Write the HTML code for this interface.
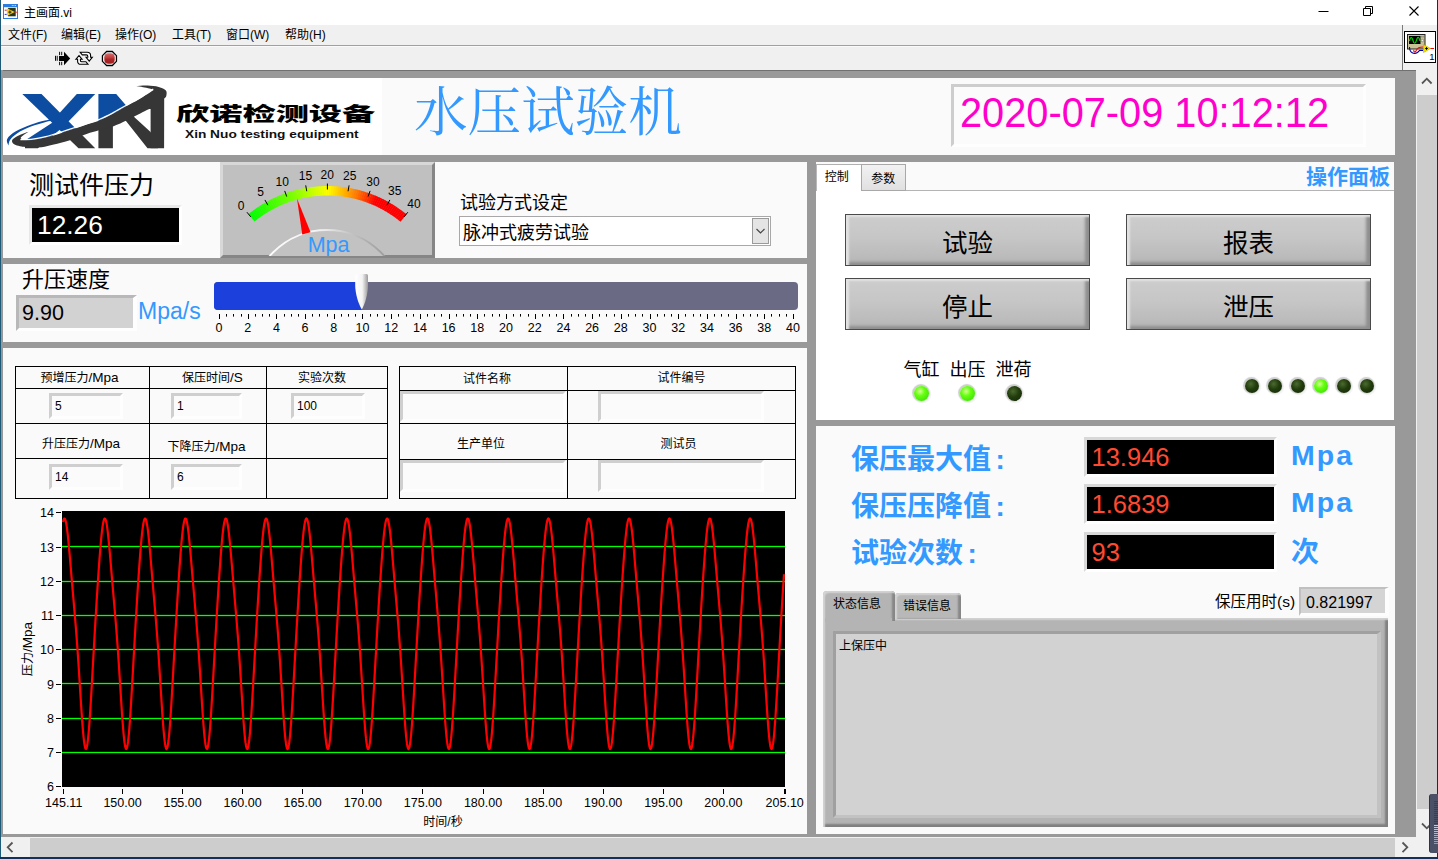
<!DOCTYPE html>
<html lang="zh-CN"><head><meta charset="utf-8"><title>主画面.vi</title>
<style>
html,body{margin:0;padding:0;}
body{width:1438px;height:859px;overflow:hidden;background:#fff;position:relative;font-family:"Liberation Sans","Noto Sans CJK SC",sans-serif;}
body div, body svg{position:absolute;}
.t{white-space:nowrap;}
.l{font-size:113%;}
#titlebar{left:0;top:0;width:1438px;height:25px;background:#fff;}
</style></head><body>
<div id="titlebar"></div>
<svg style="left:3px;top:4px" width="16" height="16" viewBox="0 0 16 16">
<rect x="0.5" y="0.5" width="14" height="14" fill="#fff" stroke="#2b7de0"/>
<rect x="0" y="0" width="15" height="3.200" fill="#2b7de0"/>
<rect x="8.800" y="1" width="1" height="1" fill="#f4e04a"/><rect x="10.400" y="1" width="1" height="1" fill="#f4e04a"/><rect x="12" y="1" width="1" height="1" fill="#f4e04a"/>
<rect x="5.100" y="3.900" width="7.600" height="8.400" fill="#27351c"/>
<path d="M3.900 4.300L11.800 8.100L3.900 11.900Z" fill="#f2d21a"/>
<path d="M5.300 8.100h3.200M6.900 6.500v3.200" stroke="#1a1a1a" stroke-width="1"/>
<rect x="1.700" y="5.700" width="2" height="1" fill="#e02020"/><rect x="1.700" y="9.900" width="2" height="1" fill="#2030e0"/><rect x="11.700" y="7.700" width="2.200" height="1" fill="#e02020"/>
</svg>
<div class="t" style='left:24px;top:4.3px;font-size:12px;color:#000;line-height:18px;'>主画面.vi</div>
<svg style="left:1300px;top:0" width="138" height="25" viewBox="0 0 138 25">
<path d="M18.5 11.5h10" stroke="#000" stroke-width="1" fill="none"/>
<path d="M63.5 8.5h7v7h-7z M65.5 8.5v-2h7v7h-2" stroke="#000" stroke-width="1" fill="none"/>
<path d="M109.5 6.5l9 9M118.5 6.5l-9 9" stroke="#000" stroke-width="1.1" fill="none"/>
</svg>
<div style="left:0px;top:25px;width:1438px;height:45px;background:#f0f0f0"></div>
<div style="left:0px;top:45px;width:1402px;height:1px;background:#a0a0a0"></div>
<div style="left:0px;top:46px;width:1402px;height:1px;background:#fafafa"></div>
<div style="left:1402px;top:25px;width:1px;height:45px;background:#7a7a7a"></div>
<div class="t" style='left:8px;top:25.5px;font-size:12px;color:#000;line-height:18px;'>文件(F)</div>
<div class="t" style='left:61px;top:25.5px;font-size:12px;color:#000;line-height:18px;'>编辑(E)</div>
<div class="t" style='left:115px;top:25.5px;font-size:12px;color:#000;line-height:18px;'>操作(O)</div>
<div class="t" style='left:172px;top:25.5px;font-size:12px;color:#000;line-height:18px;'>工具(T)</div>
<div class="t" style='left:226px;top:25.5px;font-size:12px;color:#000;line-height:18px;'>窗口(W)</div>
<div class="t" style='left:285px;top:25.5px;font-size:12px;color:#000;line-height:18px;'>帮助(H)</div>
<svg style="left:50px;top:48px" width="80" height="22" viewBox="50 48 80 22">
<path d="M59 56h5v-4.200l6.200 6.700-6.200 6.700v-4.200h-5z" fill="#000"/>
<path d="M55.500 55.800v5M57.200 55.800v5M59.600 51.800v3.400M61.700 51.800v3.400M59.600 61.800v3.400M61.700 61.800v3.400" stroke="#000" stroke-width="0.950"/>
<path d="M80.2 52.3 H87.2 Q90.6 52.3 90.6 55.4 V57.3 H92.3 L89.2 61.1 L86.1 57.3 H87.8 V56.2 Q87.8 54.9 86.4 54.9 H82.3 Z" fill="#fff" stroke="#000" stroke-width="1.100" stroke-linejoin="miter"/>
<path d="M88.0 64.3L81.0 64.3Q77.6 64.3 77.6 61.2L77.6 59.3L75.9 59.3L79.0 55.5L82.1 59.3L80.4 59.3L80.4 60.4Q80.4 61.7 81.8 61.7L85.9 61.7Z" fill="#fff" stroke="#000" stroke-width="1.100" stroke-linejoin="miter"/>
<defs><linearGradient id="abg" x1="0" x2="0" y1="0" y2="1"><stop offset="0" stop-color="#d46a6a"/><stop offset="0.45" stop-color="#c03a3a"/><stop offset="0.55" stop-color="#ac2626"/><stop offset="1" stop-color="#a02020"/></linearGradient></defs>
<path d="M106.600 51.500h5.700l4.150 4.150v5.700l-4.150 4.150h-5.700l-4.150-4.150v-5.700z" fill="#fff" stroke="#000" stroke-width="1.300"/>
<rect x="104.300" y="53.300" width="10.400" height="10.400" rx="4" ry="4" fill="url(#abg)"/>
</svg>
<svg style="left:1404px;top:31px" width="33" height="33" viewBox="0 0 33 33">
<rect x="0.5" y="0.5" width="31" height="31" fill="#fff" stroke="#000"/>
<rect x="3.500" y="3.500" width="17.500" height="14.500" fill="#c8c498" stroke="#222" stroke-width="1"/>
<rect x="5" y="5" width="11.500" height="8" fill="#000"/>
<path d="M5.500 10 C6.500 5.500 8 5.500 9 9.500 S11.500 13 12.600 9 S15 5.500 16 10" stroke="#0c0" stroke-width="1.200" fill="none"/>
<circle cx="18.400" cy="9.500" r="1.300" fill="#eee" stroke="#a86"/>
<path d="M17.800 5v1.500M19.200 5v1.500" stroke="#666" stroke-width="0.700"/>
<path d="M5.500 16 C5.500 22 10 23.500 13.500 21.500 L15.500 19.500 H19" stroke="#00a" stroke-width="1.100" fill="none"/>
<path d="M10 19 C9 21.500 11.500 21.500 12.500 19 C13.500 16.500 16 16 19 16" stroke="#f00" stroke-width="1.100" fill="none"/>
<path d="M19.500 13.500 L26.500 17.500 L19.500 21.500 Z" fill="#f0e000" stroke="#b8a800" stroke-width="0.600"/>
<path d="M21.200 17.500h2.600M22.500 16.200v2.600" stroke="#000" stroke-width="1"/>
<path d="M26.500 17.500h3.500" stroke="#f00" stroke-width="1"/>
<text x="25.200" y="28.500" font-family="Liberation Sans, sans-serif" font-size="9.500" fill="#000">1</text>
</svg>
<div style="left:0px;top:70px;width:1438px;height:789px;background:#999"></div>
<div style="left:0px;top:70px;width:1438px;height:1px;background:#707070"></div>
<div style="left:0px;top:0px;width:1px;height:859px;background:#1d5a78"></div>
<div style="left:1px;top:70px;width:2px;height:768px;background:#999"></div>
<div style="left:1416px;top:70px;width:21px;height:768px;background:#f0f0f0"></div>
<div style="left:1417px;top:95px;width:20px;height:714px;background:#cdcdcd"></div>
<div style="left:1px;top:837px;width:1415px;height:20px;background:#f0f0f0"></div>
<div style="left:30px;top:838px;width:1365px;height:19px;background:#cdcdcd"></div>
<div style="left:1416px;top:837px;width:21px;height:20px;background:#f0f0f0"></div>
<svg style="left:1416px;top:70px" width="21" height="17"><path d="M6 13.500l4.800-4.800 4.800 4.800" stroke="#555" stroke-width="1.800" fill="none"/></svg>
<svg style="left:1416px;top:817px" width="21" height="20"><path d="M6 6.500l4.800 4.800 4.800-4.800" stroke="#555" stroke-width="1.800" fill="none"/></svg>
<svg style="left:2px;top:837px" width="17" height="20"><path d="M10.500 5.500l-4.800 4.800 4.800 4.800" stroke="#555" stroke-width="1.800" fill="none"/></svg>
<svg style="left:1396px;top:837px" width="20" height="20"><path d="M6.500 5.500l4.800 4.800-4.800 4.800" stroke="#555" stroke-width="1.800" fill="none"/></svg>
<div style="left:1437px;top:0px;width:1px;height:859px;background:#1a2a55"></div>
<div style="left:0px;top:857px;width:1438px;height:2px;background:#12305a"></div>
<div style="left:1429px;top:794px;width:9px;height:59px;background:#4a5166;border-radius:3px 0 0 3px;border-left:1px solid #2e3444;"><div style="left:4px;top:7px;width:5px;height:1px;background:#3a3f4c"></div><div style="left:4px;top:9px;width:5px;height:1px;background:#3a3f4c"></div><div style="left:4px;top:11px;width:5px;height:1px;background:#3a3f4c"></div><div style="left:4px;top:13px;width:5px;height:1px;background:#3a3f4c"></div><div style="left:4px;top:15px;width:5px;height:1px;background:#3a3f4c"></div><div style="left:4px;top:17px;width:5px;height:1px;background:#3a3f4c"></div><div style="left:4px;top:19px;width:5px;height:1px;background:#3a3f4c"></div><div style="left:4px;top:21px;width:5px;height:1px;background:#3a3f4c"></div><div style="left:4px;top:23px;width:5px;height:1px;background:#3a3f4c"></div><div style="left:4px;top:25px;width:5px;height:1px;background:#3a3f4c"></div><div style="left:4px;top:27px;width:5px;height:1px;background:#3a3f4c"></div><div style="left:4px;top:29px;width:5px;height:1px;background:#3a3f4c"></div><div style="left:4px;top:31px;width:5px;height:1px;background:#d8e04a"></div><div style="left:4px;top:33px;width:5px;height:1px;background:#c8e04a"></div><div style="left:4px;top:35px;width:5px;height:1px;background:#b0e050"></div><div style="left:4px;top:37px;width:5px;height:1px;background:#98e060"></div><div style="left:4px;top:39px;width:5px;height:1px;background:#80e070"></div><div style="left:4px;top:41px;width:5px;height:1px;background:#68e088"></div><div style="left:4px;top:43px;width:5px;height:1px;background:#50e0a0"></div><div style="left:4px;top:45px;width:5px;height:1px;background:#40d8b8"></div><div style="left:4px;top:47px;width:5px;height:1px;background:#38d0c8"></div><div style="left:4px;top:49px;width:5px;height:1px;background:#30c8d0"></div></div>
<div style="left:3px;top:78px;width:1392px;height:77px;background:#fafafa"></div>
<div style="left:3px;top:162px;width:804px;height:96px;background:#fafafa"></div>
<div style="left:3px;top:264px;width:804px;height:78px;background:#fafafa"></div>
<div style="left:3px;top:348px;width:804px;height:486px;background:#fafafa"></div>
<div style="left:816px;top:162px;width:578px;height:258px;background:#fafafa"></div>
<div style="left:816px;top:426px;width:579px;height:408px;background:#fafafa"></div>
<div style="left:3px;top:78px;width:379px;height:77px;background:#fff"></div>
<svg style="left:0;top:78px" width="180" height="77" viewBox="0 78 180 77">
<defs><clipPath id="lgA"><path d="M0.0 143.0C3.4 142.6 15.2 141.0 20.7 140.5C26.2 140.0 28.8 140.5 33.0 140.0C37.2 139.5 41.6 138.6 46.1 137.5C50.6 136.4 55.0 135.0 60.0 133.4C65.0 131.8 71.0 129.8 76.0 128.2C81.0 126.6 86.0 124.9 90.0 123.6C94.0 122.3 96.2 121.8 100.0 120.2C103.8 118.6 108.4 116.3 112.8 114.0C117.2 111.7 121.9 108.8 126.3 106.3C130.7 103.8 134.5 102.0 139.1 99.3C143.7 96.6 146.8 94.2 153.6 90.0C160.4 85.8 175.6 76.7 180.0 74.0L180 70 L0 70 Z"/></clipPath><clipPath id="lgB"><path d="M0.0 143.0C3.4 142.6 15.2 141.0 20.7 140.5C26.2 140.0 28.8 140.5 33.0 140.0C37.2 139.5 41.6 138.6 46.1 137.5C50.6 136.4 55.0 135.0 60.0 133.4C65.0 131.8 71.0 129.8 76.0 128.2C81.0 126.6 86.0 124.9 90.0 123.6C94.0 122.3 96.2 121.8 100.0 120.2C103.8 118.6 108.4 116.3 112.8 114.0C117.2 111.7 121.9 108.8 126.3 106.3C130.7 103.8 134.5 102.0 139.1 99.3C143.7 96.6 146.8 94.2 153.6 90.0C160.4 85.8 175.6 76.7 180.0 74.0L180 160 L0 160 Z"/></clipPath></defs>
<g clip-path="url(#lgA)" fill="#0c4da2"><path d="M22.3 94.1H41.5L95.2 148.2H78.5Z"/><path d="M76.8 94.1H95.2L66 124L55 118Z"/><path d="M59 116L67 124L41.5 144.5L38 148.2H25V140.4L56.8 119.8Z"/><path d="M98.4 94.1H116.2L125.7 105.1L134.7 117.5L150.6 132L158 148.2H147.5L125.8 120.8L112.9 120V148.2H98.4Z"/></g>
<g clip-path="url(#lgB)" fill="#363636"><path d="M22.3 94.1H41.5L95.2 148.2H78.5Z"/><path d="M76.8 94.1H95.2L66 124L55 118Z"/><path d="M59 116L67 124L41.5 144.5L38 148.2H25V140.4L56.8 119.8Z"/><path d="M98.4 94.1H116.2L125.7 105.1L134.7 117.5L150.6 132L158 148.2H147.5L125.8 120.8L112.9 120V148.2H98.4Z"/></g>
<path d="M57.0 118.6C55.0 118.9 49.4 119.6 45.0 120.6C40.6 121.6 35.6 123.0 30.7 124.8C25.8 126.6 19.3 129.2 15.4 131.6C11.5 134.0 8.4 136.7 7.2 139.0C6.0 141.3 8.2 144.3 8.4 145.4C8.7 144.5 8.8 141.8 10.2 139.8C11.6 137.8 13.5 135.6 17.0 133.4C20.5 131.2 26.3 128.5 31.0 126.6C35.7 124.7 40.7 123.3 45.0 122.2C49.3 121.1 55.0 120.2 57.0 119.8Z" fill="#0c4da2"/>
<path d="M28.4 131.7C26.9 132.3 21.9 133.8 19.2 135.2C16.5 136.5 13.1 138.2 12.3 139.8C11.5 141.4 12.2 143.3 14.6 144.6C17.0 145.9 22.4 147.0 26.9 147.4C31.4 147.8 37.0 147.7 41.5 147.2C46.0 146.7 49.2 145.7 53.8 144.6C58.4 143.5 63.1 142.6 69.1 140.6C75.1 138.6 82.7 135.2 90.0 132.8C97.3 130.4 106.9 128.4 112.9 126.4C118.9 124.4 122.2 122.5 125.8 120.8C129.4 119.1 130.7 118.3 134.6 116.3C138.5 114.3 146.8 110.2 149.2 109.0L150.6 109 L150.6 148.2 H164.1 L164.2 98.6C164.5 98.2 165.9 97.5 166.2 96.2C166.5 94.9 167.2 92.1 165.9 90.6C164.7 89.1 161.8 87.8 158.7 87.0C155.6 86.2 151.2 85.8 147.5 85.6C143.8 85.4 138.2 86.0 136.3 86.1C137.4 86.3 140.8 86.9 143.0 87.3C145.2 87.7 147.4 88.1 149.2 88.6C151.0 89.0 152.9 89.8 153.6 90.0C151.2 91.5 143.7 96.6 139.1 99.3C134.5 102.0 130.7 103.8 126.3 106.3C121.9 108.8 117.2 111.7 112.8 114.0C108.4 116.3 103.8 118.6 100.0 120.2C96.2 121.8 94.0 122.3 90.0 123.6C86.0 124.9 81.0 126.6 76.0 128.2C71.0 129.8 65.0 131.8 60.0 133.4C55.0 135.0 50.6 136.4 46.1 137.5C41.6 138.6 36.5 139.6 33.0 140.0C29.5 140.4 27.4 140.1 25.3 139.8C23.2 139.5 21.1 138.9 20.7 138.2C20.3 137.5 21.7 136.6 23.0 135.5C24.3 134.4 27.5 132.3 28.4 131.7Z" fill="#363636"/>
<path d="M20.7 140.5C22.8 140.4 28.8 140.5 33.0 140.0C37.2 139.5 41.6 138.6 46.1 137.5C50.6 136.4 55.0 135.0 60.0 133.4C65.0 131.8 71.0 129.8 76.0 128.2C81.0 126.6 86.0 124.9 90.0 123.6C94.0 122.3 96.2 121.8 100.0 120.2C103.8 118.6 108.4 116.3 112.8 114.0C117.2 111.7 121.9 108.8 126.3 106.3C130.7 103.8 134.5 102.0 139.1 99.3C143.7 96.6 151.2 91.5 153.6 90.0" stroke="#fff" stroke-width="1.2" fill="none" transform="translate(-0.3,-0.9)"/>
</svg>
<div class="t" style='left:176px;top:101px;font-size:19.6px;color:#000;font-weight:900;line-height:26px;transform-origin:0 0;transform:scaleX(1.695);'>欣诺检测设备</div>
<div class="t" style='left:185px;top:127.3px;font-size:10.5px;color:#111;font-weight:700;line-height:14px;transform-origin:0 0;transform:scaleX(1.305);'>Xin Nuo testing equipment</div>
<div class="t" style='left:414px;top:78.5px;font-size:53.6px;color:#3399ff;font-family:"Liberation Serif","Noto Serif CJK SC",serif;line-height:68px;'>水压试验机</div>
<div style="left:951px;top:84px;width:415px;height:63px;background:#fbfbfb;border-style:solid;border-width:3px;border-color:#cdcdcd #fefefe #fefefe #cdcdcd;box-sizing:border-box"></div>
<div class="t" style='left:960px;top:89.5px;font-size:39.5px;color:#ff00cc;line-height:46px;transform-origin:0 36.600px;transform:scale(1.006,1.055);'>2020-07-09 10:12:12</div>
<div class="t" style='left:29px;top:168.5px;font-size:25px;color:#000;line-height:32px;'>测试件压力</div>
<div style="left:29px;top:205px;width:153px;height:40px;background:#000;border-style:solid;border-width:3px;border-color:#e8e8e8 #fff #fff #e8e8e8;box-sizing:border-box"></div>
<div class="t" style='left:37px;top:208px;font-size:26.3px;color:#fff;line-height:34px;'>12.26</div>
<div style="left:220px;top:162px;width:215px;height:96px;background:#c0c0c0;box-sizing:border-box;border-style:solid;border-width:3px;border-color:#d8d8d8 #868686 #868686 #d8d8d8"></div>
<svg style="left:223px;top:165px" width="209" height="91" viewBox="223 165 209 91"><path d="M248.54 214.16L250.46 212.62L256.33 220.09L254.56 221.51Z" fill="rgb(3, 255, 0)"/><path d="M250.21 212.82L252.15 211.31L257.90 218.88L256.10 220.27Z" fill="rgb(8, 255, 0)"/><path d="M251.89 211.51L253.87 210.04L259.48 217.70L257.66 219.06Z" fill="rgb(13, 255, 0)"/><path d="M253.60 210.23L255.60 208.79L261.08 216.55L259.23 217.88Z" fill="rgb(19, 255, 0)"/><path d="M255.33 208.98L257.35 207.57L262.70 215.43L260.83 216.73Z" fill="rgb(24, 255, 0)"/><path d="M257.08 207.76L259.13 206.39L264.34 214.33L262.45 215.60Z" fill="rgb(29, 255, 0)"/><path d="M258.86 206.57L260.92 205.23L266.00 213.27L264.09 214.50Z" fill="rgb(35, 255, 0)"/><path d="M260.65 205.41L262.74 204.11L267.67 212.23L265.74 213.43Z" fill="rgb(40, 255, 0)"/><path d="M262.46 204.28L264.57 203.02L269.37 211.22L267.42 212.38Z" fill="rgb(46, 255, 0)"/><path d="M264.29 203.18L266.42 201.95L271.08 210.24L269.11 211.37Z" fill="rgb(51, 255, 0)"/><path d="M266.14 202.11L268.29 200.92L272.80 209.29L270.81 210.38Z" fill="rgb(56, 255, 0)"/><path d="M268.01 201.08L270.18 199.93L274.55 208.36L272.54 209.43Z" fill="rgb(62, 255, 0)"/><path d="M269.89 200.08L272.09 198.96L276.31 207.47L274.28 208.50Z" fill="rgb(67, 255, 0)"/><path d="M271.79 199.11L274.01 198.03L278.08 206.61L276.04 207.61Z" fill="rgb(72, 255, 0)"/><path d="M273.71 198.17L275.94 197.13L279.87 205.78L277.81 206.74Z" fill="rgb(78, 255, 0)"/><path d="M275.65 197.27L277.90 196.27L281.67 204.98L279.60 205.91Z" fill="rgb(83, 255, 0)"/><path d="M277.60 196.40L279.86 195.43L283.49 204.21L281.40 205.10Z" fill="rgb(88, 255, 0)"/><path d="M279.56 195.56L281.84 194.64L285.32 203.48L283.21 204.33Z" fill="rgb(94, 255, 0)"/><path d="M281.54 194.75L283.83 193.87L287.16 202.77L285.04 203.59Z" fill="rgb(99, 255, 0)"/><path d="M283.53 193.99L285.84 193.14L289.01 202.10L286.88 202.88Z" fill="rgb(104, 255, 0)"/><path d="M285.53 193.25L287.86 192.45L290.88 201.45L288.73 202.20Z" fill="rgb(110, 255, 0)"/><path d="M287.55 192.55L289.89 191.79L292.75 200.84L290.59 201.55Z" fill="rgb(115, 255, 0)"/><path d="M289.58 191.88L291.93 191.16L294.64 200.27L292.46 200.93Z" fill="rgb(121, 255, 0)"/><path d="M291.62 191.25L293.98 190.57L296.53 199.72L294.35 200.35Z" fill="rgb(128, 255, 0)"/><path d="M293.67 190.66L296.04 190.01L298.44 199.21L296.24 199.80Z" fill="rgb(136, 255, 0)"/><path d="M295.73 190.10L298.11 189.49L300.35 198.73L298.15 199.28Z" fill="rgb(144, 255, 0)"/><path d="M297.80 189.57L300.19 189.01L302.27 198.28L300.06 198.80Z" fill="rgb(151, 255, 0)"/><path d="M299.88 189.08L302.28 188.56L304.20 197.87L301.98 198.35Z" fill="rgb(159, 255, 0)"/><path d="M301.96 188.63L304.38 188.15L306.13 197.48L303.90 197.93Z" fill="rgb(167, 255, 0)"/><path d="M304.06 188.21L306.48 187.77L308.07 197.14L305.84 197.54Z" fill="rgb(174, 255, 0)"/><path d="M306.16 187.83L308.58 187.43L310.02 196.82L307.78 197.19Z" fill="rgb(182, 255, 0)"/><path d="M308.26 187.48L310.70 187.13L311.97 196.54L309.72 196.87Z" fill="rgb(190, 255, 0)"/><path d="M310.37 187.17L312.82 186.86L313.93 196.29L311.67 196.58Z" fill="rgb(197, 255, 0)"/><path d="M312.49 186.90L314.94 186.63L315.89 196.08L313.63 196.33Z" fill="rgb(205, 255, 0)"/><path d="M314.61 186.66L317.06 186.43L317.85 195.90L315.59 196.11Z" fill="rgb(213, 255, 0)"/><path d="M316.74 186.46L319.19 186.27L319.82 195.75L317.55 195.92Z" fill="rgb(220, 255, 0)"/><path d="M318.87 186.29L321.32 186.15L321.79 195.64L319.52 195.77Z" fill="rgb(228, 255, 0)"/><path d="M321.00 186.16L323.46 186.06L323.76 195.56L321.49 195.65Z" fill="rgb(236, 255, 0)"/><path d="M323.13 186.07L325.59 186.01L325.73 195.51L323.46 195.57Z" fill="rgb(243, 255, 0)"/><path d="M325.27 186.02L327.73 186.00L327.70 195.50L325.43 195.52Z" fill="rgb(251, 255, 0)"/><path d="M327.40 186.00L329.86 186.02L329.67 195.52L327.40 195.50Z" fill="rgb(255, 250, 0)"/><path d="M329.53 186.02L331.99 186.08L331.64 195.58L329.37 195.52Z" fill="rgb(255, 241, 0)"/><path d="M331.67 186.07L334.13 186.18L333.61 195.67L331.34 195.57Z" fill="rgb(255, 232, 0)"/><path d="M333.80 186.16L336.26 186.32L335.58 195.79L333.31 195.65Z" fill="rgb(255, 222, 0)"/><path d="M335.93 186.29L338.39 186.49L337.55 195.95L335.28 195.77Z" fill="rgb(255, 213, 0)"/><path d="M338.06 186.46L340.51 186.69L339.51 196.14L337.25 195.92Z" fill="rgb(255, 203, 0)"/><path d="M340.19 186.66L342.63 186.94L341.47 196.36L339.21 196.11Z" fill="rgb(255, 194, 0)"/><path d="M342.31 186.90L344.75 187.21L343.42 196.62L341.17 196.33Z" fill="rgb(255, 185, 0)"/><path d="M344.43 187.17L346.86 187.53L345.38 196.91L343.13 196.58Z" fill="rgb(255, 175, 0)"/><path d="M346.54 187.48L348.97 187.88L347.32 197.24L345.08 196.87Z" fill="rgb(255, 166, 0)"/><path d="M348.64 187.83L351.07 188.27L349.26 197.60L347.02 197.19Z" fill="rgb(255, 157, 0)"/><path d="M350.74 188.21L353.16 188.69L351.19 197.99L348.96 197.54Z" fill="rgb(255, 147, 0)"/><path d="M352.84 188.63L355.24 189.15L353.12 198.41L350.90 197.93Z" fill="rgb(255, 138, 0)"/><path d="M354.92 189.08L357.32 189.65L355.04 198.87L352.82 198.35Z" fill="rgb(255, 128, 0)"/><path d="M357.00 189.57L359.39 190.18L356.95 199.36L354.74 198.80Z" fill="rgb(255, 119, 0)"/><path d="M359.07 190.10L361.45 190.75L358.85 199.88L356.65 199.28Z" fill="rgb(255, 106, 0)"/><path d="M361.13 190.66L363.49 191.35L360.74 200.44L358.56 199.80Z" fill="rgb(255, 94, 0)"/><path d="M363.18 191.25L365.53 191.98L362.62 201.03L360.45 200.35Z" fill="rgb(255, 81, 0)"/><path d="M365.22 191.88L367.56 192.65L364.49 201.65L362.34 200.93Z" fill="rgb(255, 69, 0)"/><path d="M367.25 192.55L369.57 193.36L366.35 202.30L364.21 201.55Z" fill="rgb(255, 56, 0)"/><path d="M369.27 193.25L371.58 194.10L368.20 202.98L366.07 202.20Z" fill="rgb(255, 44, 0)"/><path d="M371.27 193.99L373.56 194.88L370.04 203.70L367.92 202.88Z" fill="rgb(255, 31, 0)"/><path d="M373.26 194.75L375.54 195.68L371.87 204.44L369.76 203.59Z" fill="rgb(255, 19, 0)"/><path d="M375.24 195.56L377.50 196.53L373.68 205.22L371.59 204.33Z" fill="rgb(255, 6, 0)"/><path d="M377.20 196.40L379.45 197.40L375.48 206.03L373.40 205.10Z" fill="rgb(255, 0, 0)"/><path d="M379.15 197.27L381.38 198.31L377.26 206.87L375.20 205.91Z" fill="rgb(255, 0, 0)"/><path d="M381.09 198.17L383.30 199.25L379.03 207.74L376.99 206.74Z" fill="rgb(255, 0, 0)"/><path d="M383.01 199.11L385.20 200.23L380.79 208.64L378.76 207.61Z" fill="rgb(255, 0, 0)"/><path d="M384.91 200.08L387.08 201.24L382.52 209.57L380.52 208.50Z" fill="rgb(255, 0, 0)"/><path d="M386.79 201.08L388.94 202.27L384.25 210.53L382.26 209.43Z" fill="rgb(255, 0, 0)"/><path d="M388.66 202.11L390.79 203.35L385.95 211.52L383.99 210.38Z" fill="rgb(255, 0, 0)"/><path d="M390.51 203.18L392.62 204.45L387.64 212.54L385.69 211.37Z" fill="rgb(255, 0, 0)"/><path d="M392.34 204.28L394.43 205.58L389.31 213.59L387.38 212.38Z" fill="rgb(255, 0, 0)"/><path d="M394.15 205.41L396.22 206.75L390.96 214.66L389.06 213.43Z" fill="rgb(255, 0, 0)"/><path d="M395.94 206.57L397.98 207.94L392.60 215.77L390.71 214.50Z" fill="rgb(255, 0, 0)"/><path d="M397.72 207.76L399.73 209.17L394.21 216.90L392.35 215.60Z" fill="rgb(255, 0, 0)"/><path d="M399.47 208.98L401.46 210.42L395.81 218.06L393.97 216.73Z" fill="rgb(255, 0, 0)"/><path d="M401.20 210.23L403.16 211.71L397.38 219.25L395.57 217.88Z" fill="rgb(255, 0, 0)"/><path d="M402.91 211.51L404.85 213.02L398.94 220.46L397.14 219.06Z" fill="rgb(255, 0, 0)"/><path d="M404.59 212.82L406.51 214.36L400.47 221.70L398.70 220.27Z" fill="rgb(255, 0, 0)"/><path d="M246.96 212.22L250.76 216.87" stroke="#000" stroke-width="1"/><text x="241.2" y="209.9" text-anchor="middle" font-family="Liberation Sans, sans-serif" font-size="12" fill="#000">0</text><path d="M264.91 199.94L267.86 205.16" stroke="#000" stroke-width="1"/><text x="260.6" y="196.0" text-anchor="middle" font-family="Liberation Sans, sans-serif" font-size="12" fill="#000">5</text><path d="M284.69 190.90L286.71 196.55" stroke="#000" stroke-width="1"/><text x="282.3" y="185.5" text-anchor="middle" font-family="Liberation Sans, sans-serif" font-size="12" fill="#000">10</text><path d="M305.73 185.36L306.75 191.27" stroke="#000" stroke-width="1"/><text x="305.4" y="179.9" text-anchor="middle" font-family="Liberation Sans, sans-serif" font-size="12" fill="#000">15</text><path d="M327.40 183.50L327.40 189.50" stroke="#000" stroke-width="1"/><text x="327.3" y="178.8" text-anchor="middle" font-family="Liberation Sans, sans-serif" font-size="12" fill="#000">20</text><path d="M349.07 185.36L348.05 191.27" stroke="#000" stroke-width="1"/><text x="349.7" y="179.9" text-anchor="middle" font-family="Liberation Sans, sans-serif" font-size="12" fill="#000">25</text><path d="M370.11 190.90L368.09 196.55" stroke="#000" stroke-width="1"/><text x="373.0" y="185.5" text-anchor="middle" font-family="Liberation Sans, sans-serif" font-size="12" fill="#000">30</text><path d="M389.89 199.94L386.94 205.16" stroke="#000" stroke-width="1"/><text x="394.8" y="194.9" text-anchor="middle" font-family="Liberation Sans, sans-serif" font-size="12" fill="#000">35</text><path d="M407.84 212.22L404.04 216.87" stroke="#000" stroke-width="1"/><text x="413.9" y="208.1" text-anchor="middle" font-family="Liberation Sans, sans-serif" font-size="12" fill="#000">40</text><defs><linearGradient id="hubg" x1="0" x2="1" y1="0" y2="0"><stop offset="0" stop-color="#fff"/><stop offset="0.45" stop-color="#f2f2f2"/><stop offset="0.75" stop-color="#b0b0b0"/><stop offset="1" stop-color="#8c8c8c"/></linearGradient></defs><circle cx="327" cy="306" r="76" fill="#c2c2c2" stroke="url(#hubg)" stroke-width="1.800"/><path d="M296.97 198.56L302.26 234.43L310.56 232.17Z" fill="#ff0000"/><text x="328.600" y="252" text-anchor="middle" font-family="Liberation Sans, sans-serif" font-size="21.500" fill="#3399ff">Mpa</text></svg>
<div class="t" style='left:460px;top:191px;font-size:18px;color:#000;line-height:24px;'>试验方式设定</div>
<div style="left:459px;top:216px;width:312px;height:30px;background:#fff;border:1px solid #a8a8a8;box-sizing:border-box"></div>
<div class="t" style='left:463px;top:220.5px;font-size:18px;color:#000;line-height:24px;'>脉冲式疲劳试验</div>
<div style="left:752px;top:218px;width:17px;height:26px;background:#e4e4e4;border:1px solid #9a9a9a;box-sizing:border-box"></div>
<svg style="left:752px;top:218px" width="17" height="26"><path d="M4.500 11l4 4 4-4" stroke="#444" stroke-width="1.200" fill="none"/></svg>
<div class="t" style='left:22px;top:265.5px;font-size:22px;color:#000;line-height:28px;'>升压速度</div>
<div style="left:15.5px;top:294.7px;width:121.5px;height:36.4px;background:#d2d2d2;border-style:solid;border-width:3px 4px 3.400px 3px;border-color:#b8b8b8 #fefefe #fefefe #b8b8b8;box-sizing:border-box"></div>
<div class="t" style='left:22px;top:299px;font-size:21.5px;color:#000;line-height:28px;'>9.90</div>
<div class="t" style='left:138px;top:296.5px;font-size:23px;color:#3399ff;line-height:28px;'>Mpa/s</div>
<div style="left:214px;top:282px;width:584px;height:28px;background:#6a6a84;border-radius:4px"></div>
<div style="left:214px;top:282px;width:148px;height:28px;background:#1c40dc;border-radius:4px 0 0 4px"></div>
<svg style="left:353px;top:272px" width="18" height="40" viewBox="0 0 18 40"><defs><linearGradient id="th" x1="0" x2="1"><stop offset="0" stop-color="#fff"/><stop offset="0.55" stop-color="#f4f4f4"/><stop offset="1" stop-color="#9a9a9a"/></linearGradient></defs>
<path d="M2.200 3.500 Q2.200 2 3.700 2 H13.500 Q15 2 15 3.500 V13 C15 22 12 32 8.800 37.500 C5.500 32 2.200 22 2.200 13 Z" fill="url(#th)"/></svg>
<svg style="left:200px;top:310px" width="607" height="30" viewBox="200 310 607 30"><path d="M219.5 314v5M226.5 314v2.600M233.5 314v2.600M241.5 314v2.600M248.5 314v5M255.5 314v2.600M262.5 314v2.600M269.5 314v2.600M276.5 314v5M284.5 314v2.600M291.5 314v2.600M298.5 314v2.600M305.5 314v5M312.5 314v2.600M319.5 314v2.600M327.5 314v2.600M334.5 314v5M341.5 314v2.600M348.5 314v2.600M355.5 314v2.600M362.5 314v5M370.5 314v2.600M377.5 314v2.600M384.5 314v2.600M391.5 314v5M398.5 314v2.600M406.5 314v2.600M413.5 314v2.600M420.5 314v5M427.5 314v2.600M434.5 314v2.600M441.5 314v2.600M449.5 314v5M456.5 314v2.600M463.5 314v2.600M470.5 314v2.600M477.5 314v5M484.5 314v2.600M492.5 314v2.600M499.5 314v2.600M506.5 314v5M513.5 314v2.600M520.5 314v2.600M528.5 314v2.600M535.5 314v5M542.5 314v2.600M549.5 314v2.600M556.5 314v2.600M563.5 314v5M571.5 314v2.600M578.5 314v2.600M585.5 314v2.600M592.5 314v5M599.5 314v2.600M606.5 314v2.600M614.5 314v2.600M621.5 314v5M628.5 314v2.600M635.5 314v2.600M642.5 314v2.600M650.5 314v5M657.5 314v2.600M664.5 314v2.600M671.5 314v2.600M678.5 314v5M685.5 314v2.600M693.5 314v2.600M700.5 314v2.600M707.5 314v5M714.5 314v2.600M721.5 314v2.600M728.5 314v2.600M736.5 314v5M743.5 314v2.600M750.5 314v2.600M757.5 314v2.600M764.5 314v5M771.5 314v2.600M779.5 314v2.600M786.5 314v2.600M793.5 314v5" stroke="#000" stroke-width="1"/><text x="219.0" y="332.400" text-anchor="middle" font-family="Liberation Sans, sans-serif" font-size="12.500" fill="#000">0</text><text x="247.7" y="332.400" text-anchor="middle" font-family="Liberation Sans, sans-serif" font-size="12.500" fill="#000">2</text><text x="276.4" y="332.400" text-anchor="middle" font-family="Liberation Sans, sans-serif" font-size="12.500" fill="#000">4</text><text x="305.1" y="332.400" text-anchor="middle" font-family="Liberation Sans, sans-serif" font-size="12.500" fill="#000">6</text><text x="333.8" y="332.400" text-anchor="middle" font-family="Liberation Sans, sans-serif" font-size="12.500" fill="#000">8</text><text x="362.5" y="332.400" text-anchor="middle" font-family="Liberation Sans, sans-serif" font-size="12.500" fill="#000">10</text><text x="391.2" y="332.400" text-anchor="middle" font-family="Liberation Sans, sans-serif" font-size="12.500" fill="#000">12</text><text x="419.9" y="332.400" text-anchor="middle" font-family="Liberation Sans, sans-serif" font-size="12.500" fill="#000">14</text><text x="448.6" y="332.400" text-anchor="middle" font-family="Liberation Sans, sans-serif" font-size="12.500" fill="#000">16</text><text x="477.3" y="332.400" text-anchor="middle" font-family="Liberation Sans, sans-serif" font-size="12.500" fill="#000">18</text><text x="506.0" y="332.400" text-anchor="middle" font-family="Liberation Sans, sans-serif" font-size="12.500" fill="#000">20</text><text x="534.7" y="332.400" text-anchor="middle" font-family="Liberation Sans, sans-serif" font-size="12.500" fill="#000">22</text><text x="563.4" y="332.400" text-anchor="middle" font-family="Liberation Sans, sans-serif" font-size="12.500" fill="#000">24</text><text x="592.1" y="332.400" text-anchor="middle" font-family="Liberation Sans, sans-serif" font-size="12.500" fill="#000">26</text><text x="620.8" y="332.400" text-anchor="middle" font-family="Liberation Sans, sans-serif" font-size="12.500" fill="#000">28</text><text x="649.5" y="332.400" text-anchor="middle" font-family="Liberation Sans, sans-serif" font-size="12.500" fill="#000">30</text><text x="678.2" y="332.400" text-anchor="middle" font-family="Liberation Sans, sans-serif" font-size="12.500" fill="#000">32</text><text x="706.9" y="332.400" text-anchor="middle" font-family="Liberation Sans, sans-serif" font-size="12.500" fill="#000">34</text><text x="735.6" y="332.400" text-anchor="middle" font-family="Liberation Sans, sans-serif" font-size="12.500" fill="#000">36</text><text x="764.3" y="332.400" text-anchor="middle" font-family="Liberation Sans, sans-serif" font-size="12.500" fill="#000">38</text><text x="793.0" y="332.400" text-anchor="middle" font-family="Liberation Sans, sans-serif" font-size="12.500" fill="#000">40</text></svg>
<div style="left:15px;top:366px;width:373px;height:133px;border:1px solid #000;box-sizing:border-box"></div>
<div style="left:15px;top:388px;width:372px;height:1px;background:#000"></div>
<div style="left:15px;top:423px;width:372px;height:1px;background:#000"></div>
<div style="left:15px;top:458px;width:372px;height:1px;background:#000"></div>
<div style="left:149px;top:366px;width:1px;height:133px;background:#000"></div>
<div style="left:266px;top:366px;width:1px;height:133px;background:#000"></div>
<div style="left:49px;top:393px;width:74px;height:26px;background:#fbfbfb;box-sizing:border-box;border-style:solid;border-width:3px;border-color:#cfcfcf #fefefe #fefefe #cfcfcf"></div>
<div class="t" style='left:55px;top:397px;font-size:12px;color:#000;line-height:18px;'>5</div>
<div style="left:171px;top:393px;width:71px;height:26px;background:#fbfbfb;box-sizing:border-box;border-style:solid;border-width:3px;border-color:#cfcfcf #fefefe #fefefe #cfcfcf"></div>
<div class="t" style='left:177px;top:397px;font-size:12px;color:#000;line-height:18px;'>1</div>
<div style="left:291px;top:393px;width:74px;height:26px;background:#fbfbfb;box-sizing:border-box;border-style:solid;border-width:3px;border-color:#cfcfcf #fefefe #fefefe #cfcfcf"></div>
<div class="t" style='left:297px;top:397px;font-size:12px;color:#000;line-height:18px;'>100</div>
<div style="left:49px;top:464px;width:74px;height:26px;background:#fbfbfb;box-sizing:border-box;border-style:solid;border-width:3px;border-color:#cfcfcf #fefefe #fefefe #cfcfcf"></div>
<div class="t" style='left:55px;top:468px;font-size:12px;color:#000;line-height:18px;'>14</div>
<div style="left:171px;top:464px;width:71px;height:26px;background:#fbfbfb;box-sizing:border-box;border-style:solid;border-width:3px;border-color:#cfcfcf #fefefe #fefefe #cfcfcf"></div>
<div class="t" style='left:177px;top:468px;font-size:12px;color:#000;line-height:18px;'>6</div>
<div class="t" style='left:-70.5px;top:370.0px;font-size:12px;color:#000;line-height:16px;width:300px;text-align:center;'>预增压力<span class="l">/Mpa</span></div>
<div class="t" style='left:62.5px;top:370.0px;font-size:12px;color:#000;line-height:16px;width:300px;text-align:center;'>保压时间<span class="l">/S</span></div>
<div class="t" style='left:172.0px;top:370.0px;font-size:12px;color:#000;line-height:16px;width:300px;text-align:center;'>实验次数</div>
<div class="t" style='left:-69.0px;top:435.5px;font-size:12px;color:#000;line-height:16px;width:300px;text-align:center;'>升压压力<span class="l">/Mpa</span></div>
<div class="t" style='left:56.5px;top:439.0px;font-size:12px;color:#000;line-height:16px;width:300px;text-align:center;'>下降压力<span class="l">/Mpa</span></div>
<div style="left:399px;top:366px;width:397px;height:133px;border:1px solid #000;box-sizing:border-box"></div>
<div style="left:399px;top:390px;width:396px;height:1px;background:#000"></div>
<div style="left:399px;top:423px;width:396px;height:1px;background:#000"></div>
<div style="left:399px;top:459px;width:396px;height:1px;background:#000"></div>
<div style="left:567px;top:366px;width:1px;height:133px;background:#000"></div>
<div style="left:400px;top:391px;width:166px;height:31px;background:#fbfbfb;box-sizing:border-box;border-style:solid;border-width:3px;border-color:#cfcfcf #fefefe #fefefe #cfcfcf"></div>
<div style="left:598px;top:391px;width:166px;height:31px;background:#fbfbfb;box-sizing:border-box;border-style:solid;border-width:3px;border-color:#cfcfcf #fefefe #fefefe #cfcfcf"></div>
<div style="left:400px;top:460px;width:166px;height:32px;background:#fbfbfb;box-sizing:border-box;border-style:solid;border-width:3px;border-color:#cfcfcf #fefefe #fefefe #cfcfcf"></div>
<div style="left:598px;top:460px;width:166px;height:32px;background:#fbfbfb;box-sizing:border-box;border-style:solid;border-width:3px;border-color:#cfcfcf #fefefe #fefefe #cfcfcf"></div>
<div class="t" style='left:337.0px;top:371.0px;font-size:12px;color:#000;line-height:16px;width:300px;text-align:center;'>试件名称</div>
<div class="t" style='left:531.5px;top:370.0px;font-size:12px;color:#000;line-height:16px;width:300px;text-align:center;'>试件编号</div>
<div class="t" style='left:331.0px;top:436.0px;font-size:12px;color:#000;line-height:16px;width:300px;text-align:center;'>生产单位</div>
<div class="t" style='left:528.5px;top:436.0px;font-size:12px;color:#000;line-height:16px;width:300px;text-align:center;'>测试员</div>
<div style="left:62px;top:511px;width:723px;height:276px;background:#000"></div>
<svg style="left:0;top:500px" width="810" height="335" viewBox="0 500 810 335"><rect x="62" y="751.85" width="723" height="1.300" fill="#00ff00"/><rect x="62" y="717.85" width="723" height="1.300" fill="#00ff00"/><rect x="62" y="682.85" width="723" height="1.300" fill="#00ff00"/><rect x="62" y="648.85" width="723" height="1.300" fill="#00ff00"/><rect x="62" y="614.85" width="723" height="1.300" fill="#00ff00"/><rect x="62" y="580.85" width="723" height="1.300" fill="#00ff00"/><rect x="62" y="545.85" width="723" height="1.300" fill="#00ff00"/><path d="M63.0 522.0L63.5 520.0L64.0 518.8L64.5 518.5L65.0 518.9L65.5 520.2L66.0 522.2L66.5 525.0L67.0 528.5L67.5 532.5L68.0 537.1L68.5 542.1L69.0 547.5L69.5 553.1L70.0 558.8L70.5 564.7L71.0 570.7L71.5 576.6L72.0 582.5L72.5 588.3L73.0 594.1L73.5 599.9L74.0 605.7L74.5 611.5L75.0 617.4L75.5 623.4L76.0 629.6L76.5 636.0L77.0 642.7L77.5 649.6L78.0 656.8L78.5 664.3L79.0 672.0L79.5 679.8L80.0 687.8L80.5 695.7L81.0 703.5L81.5 711.1L82.0 718.3L82.5 725.1L83.0 731.2L83.5 736.6L84.0 741.1L84.5 744.6L85.0 747.2L85.5 748.6L86.0 748.9L86.5 748.1L87.0 746.2L87.5 743.2L88.0 739.1L88.5 734.2L89.0 728.3L89.5 721.7L90.0 714.5L90.5 706.7L91.0 698.5L91.5 690.0L92.0 681.2L92.5 672.4L93.0 663.5L93.5 654.5L94.0 645.7L94.5 637.0L95.0 628.3L95.5 619.9L96.0 611.6L96.5 603.4L97.0 595.5L97.5 587.7L98.0 580.1L98.5 572.7L99.0 565.7L99.5 558.8L100.0 552.4L100.5 546.3L101.0 540.6L101.5 535.5L102.0 530.9L102.5 527.0L103.0 523.7L103.5 521.2L104.0 519.5L104.5 518.6L105.0 518.5L105.5 519.3L106.0 520.8L106.5 523.1L107.0 526.1L107.5 529.8L108.0 534.0L108.5 538.8L109.0 543.9L109.5 549.3L110.0 555.0L110.5 560.8L111.0 566.7L111.5 572.7L112.0 578.6L112.5 584.5L113.0 590.3L113.5 596.1L114.0 601.9L114.5 607.6L115.0 613.5L115.5 619.4L116.0 625.5L116.5 631.7L117.0 638.3L117.5 645.0L118.0 652.0L118.5 659.3L119.0 666.9L119.5 674.6L120.0 682.5L120.5 690.5L121.0 698.4L121.5 706.1L122.0 713.6L122.5 720.7L123.0 727.2L123.5 733.1L124.0 738.2L124.5 742.4L125.0 745.6L125.5 747.8L126.0 748.9L126.5 748.8L127.0 747.6L127.5 745.3L128.0 741.9L128.5 737.6L129.0 732.3L129.5 726.1L130.0 719.3L130.5 711.9L131.0 703.9L131.5 695.6L132.0 687.0L132.5 678.2L133.0 669.3L133.5 660.4L134.0 651.5L134.5 642.7L135.0 634.0L135.5 625.4L136.0 617.0L136.5 608.8L137.0 600.7L137.5 592.8L138.0 585.1L138.5 577.6L139.0 570.3L139.5 563.3L140.0 556.6L140.5 550.2L141.0 544.3L141.5 538.8L142.0 533.9L142.5 529.5L143.0 525.8L143.5 522.8L144.0 520.6L144.5 519.1L145.0 518.5L145.5 518.7L146.0 519.7L146.5 521.5L147.0 524.1L147.5 527.3L148.0 531.2L148.5 535.6L149.0 540.5L149.5 545.7L150.0 551.2L150.5 557.0L151.0 562.8L151.5 568.8L152.0 574.7L152.5 580.6L153.0 586.5L153.5 592.3L154.0 598.1L154.5 603.8L155.0 609.6L155.5 615.5L156.0 621.4L156.5 627.6L157.0 633.9L157.5 640.5L158.0 647.4L158.5 654.5L159.0 661.9L159.5 669.5L160.0 677.3L160.5 685.2L161.0 693.2L161.5 701.0L162.0 708.7L162.5 716.1L163.0 723.0L163.5 729.3L164.0 734.9L164.5 739.7L165.0 743.6L165.5 746.5L166.0 748.3L166.5 749.0L167.0 748.5L167.5 746.9L168.0 744.3L168.5 740.5L169.0 735.9L169.5 730.3L170.0 723.9L170.5 716.8L171.0 709.2L171.5 701.2L172.0 692.7L172.5 684.0L173.0 675.2L173.5 666.3L174.0 657.4L174.5 648.5L175.0 639.7L175.5 631.1L176.0 622.6L176.5 614.2L177.0 606.0L177.5 598.0L178.0 590.1L178.5 582.5L179.0 575.1L179.5 567.9L180.0 561.0L180.5 554.4L181.0 548.2L181.5 542.4L182.0 537.1L182.5 532.3L183.0 528.2L183.5 524.7L184.0 522.0L184.5 520.0L185.0 518.8L185.5 518.5L186.0 518.9L186.5 520.2L187.0 522.3L187.5 525.1L188.0 528.5L188.5 532.6L189.0 537.2L189.5 542.2L190.0 547.6L190.5 553.2L191.0 559.0L191.5 564.8L192.0 570.8L192.5 576.7L193.0 582.6L193.5 588.4L194.0 594.2L194.5 600.0L195.0 605.8L195.5 611.6L196.0 617.5L196.5 623.5L197.0 629.7L197.5 636.1L198.0 642.8L198.5 649.8L199.0 657.0L199.5 664.5L200.0 672.1L200.5 680.0L201.0 687.9L201.5 695.9L202.0 703.7L202.5 711.3L203.0 718.5L203.5 725.2L204.0 731.3L204.5 736.7L205.0 741.2L205.5 744.7L206.0 747.2L206.5 748.6L207.0 748.9L207.5 748.1L208.0 746.1L208.5 743.1L209.0 739.1L209.5 734.0L210.0 728.2L210.5 721.6L211.0 714.3L211.5 706.5L212.0 698.3L212.5 689.8L213.0 681.1L213.5 672.2L214.0 663.3L214.5 654.4L215.0 645.5L215.5 636.8L216.0 628.2L216.5 619.7L217.0 611.4L217.5 603.3L218.0 595.3L218.5 587.5L219.0 580.0L219.5 572.6L220.0 565.5L220.5 558.7L221.0 552.2L221.5 546.2L222.0 540.5L222.5 535.4L223.0 530.8L223.5 526.9L224.0 523.7L224.5 521.2L225.0 519.5L225.5 518.6L226.0 518.5L226.5 519.3L227.0 520.8L227.5 523.2L228.0 526.2L228.5 529.9L229.0 534.1L229.5 538.9L230.0 544.0L230.5 549.4L231.0 555.1L231.5 561.0L232.0 566.9L232.5 572.8L233.0 578.7L233.5 584.6L234.0 590.4L234.5 596.2L235.0 602.0L235.5 607.8L236.0 613.6L236.5 619.5L237.0 625.6L237.5 631.9L238.0 638.4L238.5 645.2L239.0 652.2L239.5 659.5L240.0 667.0L240.5 674.8L241.0 682.7L241.5 690.6L242.0 698.5L242.5 706.3L243.0 713.8L243.5 720.8L244.0 727.4L244.5 733.2L245.0 738.3L245.5 742.5L246.0 745.7L246.5 747.8L247.0 748.9L247.5 748.8L248.0 747.6L248.5 745.2L249.0 741.8L249.5 737.5L250.0 732.1L250.5 726.0L251.0 719.2L251.5 711.7L252.0 703.8L252.5 695.5L253.0 686.8L253.5 678.1L254.0 669.2L254.5 660.2L255.0 651.4L255.5 642.5L256.0 633.8L256.5 625.3L257.0 616.9L257.5 608.6L258.0 600.5L258.5 592.6L259.0 584.9L259.5 577.4L260.0 570.2L260.5 563.2L261.0 556.5L261.5 550.1L262.0 544.2L262.5 538.7L263.0 533.8L263.5 529.4L264.0 525.7L264.5 522.8L265.0 520.5L265.5 519.1L266.0 518.5L266.5 518.7L267.0 519.7L267.5 521.5L268.0 524.1L268.5 527.4L269.0 531.3L269.5 535.7L270.0 540.6L270.5 545.8L271.0 551.4L271.5 557.1L272.0 563.0L272.5 568.9L273.0 574.8L273.5 580.7L274.0 586.6L274.5 592.4L275.0 598.2L275.5 603.9L276.0 609.7L276.5 615.6L277.0 621.6L277.5 627.7L278.0 634.1L278.5 640.7L279.0 647.5L279.5 654.6L280.0 662.0L280.5 669.7L281.0 677.5L281.5 685.4L282.0 693.3L282.5 701.2L283.0 708.9L283.5 716.2L284.0 723.1L284.5 729.4L285.0 735.0L285.5 739.8L286.0 743.7L286.5 746.5L287.0 748.3L287.5 749.0L288.0 748.5L288.5 746.9L289.0 744.2L289.5 740.5L290.0 735.7L290.5 730.1L291.0 723.8L291.5 716.7L292.0 709.1L292.5 701.0L293.0 692.6L293.5 683.9L294.0 675.0L294.5 666.1L295.0 657.2L295.5 648.3L296.0 639.6L296.5 630.9L297.0 622.4L297.5 614.0L298.0 605.8L298.5 597.8L299.0 590.0L299.5 582.3L300.0 574.9L300.5 567.8L301.0 560.9L301.5 554.3L302.0 548.1L302.5 542.3L303.0 537.0L303.5 532.2L304.0 528.1L304.5 524.6L305.0 521.9L305.5 520.0L306.0 518.8L306.5 518.5L307.0 519.0L307.5 520.3L308.0 522.3L308.5 525.1L309.0 528.6L309.5 532.7L310.0 537.3L310.5 542.3L311.0 547.7L311.5 553.3L312.0 559.1L312.5 565.0L313.0 570.9L313.5 576.8L314.0 582.7L314.5 588.6L315.0 594.4L315.5 600.1L316.0 605.9L316.5 611.7L317.0 617.6L317.5 623.6L318.0 629.8L318.5 636.3L319.0 643.0L319.5 649.9L320.0 657.1L320.5 664.6L321.0 672.3L321.5 680.2L322.0 688.1L322.5 696.0L323.0 703.8L323.5 711.4L324.0 718.6L324.5 725.3L325.0 731.4L325.5 736.8L326.0 741.2L326.5 744.8L327.0 747.3L327.5 748.7L328.0 748.9L328.5 748.1L329.0 746.1L329.5 743.0L330.0 739.0L330.5 733.9L331.0 728.1L331.5 721.4L332.0 714.2L332.5 706.4L333.0 698.2L333.5 689.6L334.0 680.9L334.5 672.0L335.0 663.1L335.5 654.2L336.0 645.4L336.5 636.6L337.0 628.0L337.5 619.5L338.0 611.2L338.5 603.1L339.0 595.1L339.5 587.4L340.0 579.8L340.5 572.5L341.0 565.4L341.5 558.6L342.0 552.1L342.5 546.0L343.0 540.4L343.5 535.3L344.0 530.8L344.5 526.8L345.0 523.6L345.5 521.2L346.0 519.5L346.5 518.6L347.0 518.5L347.5 519.3L348.0 520.9L348.5 523.2L349.0 526.3L349.5 529.9L350.0 534.2L350.5 539.0L351.0 544.1L351.5 549.6L352.0 555.2L352.5 561.1L353.0 567.0L353.5 572.9L354.0 578.8L354.5 584.7L355.0 590.5L355.5 596.3L356.0 602.1L356.5 607.9L357.0 613.7L357.5 619.6L358.0 625.7L358.5 632.0L359.0 638.5L359.5 645.3L360.0 652.3L360.5 659.6L361.0 667.2L361.5 675.0L362.0 682.8L362.5 690.8L363.0 698.7L363.5 706.4L364.0 713.9L364.5 721.0L365.0 727.5L365.5 733.3L366.0 738.4L366.5 742.5L367.0 745.7L367.5 747.9L368.0 748.9L368.5 748.8L369.0 747.5L369.5 745.2L370.0 741.8L370.5 737.4L371.0 732.0L371.5 725.9L372.0 719.0L372.5 711.6L373.0 703.6L373.5 695.3L374.0 686.7L374.5 677.9L375.0 669.0L375.5 660.1L376.0 651.2L376.5 642.4L377.0 633.7L377.5 625.1L378.0 616.7L378.5 608.4L379.0 600.4L379.5 592.5L380.0 584.8L380.5 577.3L381.0 570.0L381.5 563.0L382.0 556.3L382.5 550.0L383.0 544.1L383.5 538.6L384.0 533.7L384.5 529.3L385.0 525.7L385.5 522.7L386.0 520.5L386.5 519.1L387.0 518.5L387.5 518.7L388.0 519.8L388.5 521.6L389.0 524.2L389.5 527.4L390.0 531.3L390.5 535.8L391.0 540.7L391.5 545.9L392.0 551.5L392.5 557.2L393.0 563.1L393.5 569.0L394.0 574.9L394.5 580.8L395.0 586.7L395.5 592.5L396.0 598.3L396.5 604.1L397.0 609.8L397.5 615.7L398.0 621.7L398.5 627.8L399.0 634.2L399.5 640.8L400.0 647.7L400.5 654.8L401.0 662.2L401.5 669.8L402.0 677.6L402.5 685.5L403.0 693.5L403.5 701.4L404.0 709.0L404.5 716.4L405.0 723.2L405.5 729.5L406.0 735.1L406.5 739.9L407.0 743.7L407.5 746.6L408.0 748.3L408.5 749.0L409.0 748.5L409.5 746.8L410.0 744.1L410.5 740.4L411.0 735.6L411.5 730.0L412.0 723.6L412.5 716.6L413.0 708.9L413.5 700.8L414.0 692.4L414.5 683.7L415.0 674.9L415.5 666.0L416.0 657.0L416.5 648.2L417.0 639.4L417.5 630.7L418.0 622.2L418.5 613.9L419.0 605.7L419.5 597.7L420.0 589.8L420.5 582.2L421.0 574.8L421.5 567.6L422.0 560.7L422.5 554.1L423.0 547.9L423.5 542.2L424.0 536.9L424.5 532.1L425.0 528.0L425.5 524.6L426.0 521.9L426.5 519.9L427.0 518.8L427.5 518.5L428.0 519.0L428.5 520.3L429.0 522.4L429.5 525.2L430.0 528.7L430.5 532.8L431.0 537.4L431.5 542.4L432.0 547.8L432.5 553.4L433.0 559.2L433.5 565.1L434.0 571.0L434.5 576.9L435.0 582.8L435.5 588.7L436.0 594.5L436.5 600.2L437.0 606.0L437.5 611.8L438.0 617.7L438.5 623.8L439.0 630.0L439.5 636.4L440.0 643.1L440.5 650.0L441.0 657.3L441.5 664.8L442.0 672.5L442.5 680.3L443.0 688.2L443.5 696.2L444.0 704.0L444.5 711.6L445.0 718.8L445.5 725.5L446.0 731.5L446.5 736.9L447.0 741.3L447.5 744.8L448.0 747.3L448.5 748.7L449.0 748.9L449.5 748.0L450.0 746.0L450.5 743.0L451.0 738.9L451.5 733.8L452.0 727.9L452.5 721.3L453.0 714.0L453.5 706.2L454.0 698.0L454.5 689.5L455.0 680.7L455.5 671.8L456.0 662.9L456.5 654.0L457.0 645.2L457.5 636.4L458.0 627.8L458.5 619.4L459.0 611.1L459.5 602.9L460.0 595.0L460.5 587.2L461.0 579.7L461.5 572.3L462.0 565.2L462.5 558.4L463.0 552.0L463.5 545.9L464.0 540.3L464.5 535.2L465.0 530.7L465.5 526.8L466.0 523.6L466.5 521.1L467.0 519.4L467.5 518.6L468.0 518.6L468.5 519.3L469.0 520.9L469.5 523.3L470.0 526.3L470.5 530.0L471.0 534.3L471.5 539.1L472.0 544.2L472.5 549.7L473.0 555.4L473.5 561.2L474.0 567.1L474.5 573.0L475.0 579.0L475.5 584.8L476.0 590.7L476.5 596.4L477.0 602.2L477.5 608.0L478.0 613.8L478.5 619.8L479.0 625.8L479.5 632.1L480.0 638.6L480.5 645.4L481.0 652.5L481.5 659.8L482.0 667.4L482.5 675.1L483.0 683.0L483.5 691.0L484.0 698.9L484.5 706.6L485.0 714.1L485.5 721.1L486.0 727.6L486.5 733.4L487.0 738.5L487.5 742.6L488.0 745.8L488.5 747.9L489.0 748.9L489.5 748.8L490.0 747.5L490.5 745.1L491.0 741.7L491.5 737.3L492.0 731.9L492.5 725.8L493.0 718.9L493.5 711.4L494.0 703.5L494.5 695.1L495.0 686.5L495.5 677.7L496.0 668.8L496.5 659.9L497.0 651.0L497.5 642.2L498.0 633.5L498.5 624.9L499.0 616.5L499.5 608.3L500.0 600.2L500.5 592.3L501.0 584.6L501.5 577.1L502.0 569.9L502.5 562.9L503.0 556.2L503.5 549.9L504.0 544.0L504.5 538.5L505.0 533.6L505.5 529.3L506.0 525.6L506.5 522.6L507.0 520.5L507.5 519.1L508.0 518.5L508.5 518.7L509.0 519.8L509.5 521.6L510.0 524.2L510.5 527.5L511.0 531.4L511.5 535.9L512.0 540.8L512.5 546.0L513.0 551.6L513.5 557.3L514.0 563.2L514.5 569.1L515.0 575.0L515.5 581.0L516.0 586.8L516.5 592.6L517.0 598.4L517.5 604.2L518.0 610.0L518.5 615.8L519.0 621.8L519.5 628.0L520.0 634.3L520.5 640.9L521.0 647.8L521.5 654.9L522.0 662.3L522.5 670.0L523.0 677.8L523.5 685.7L524.0 693.6L524.5 701.5L525.0 709.2L525.5 716.5L526.0 723.4L526.5 729.7L527.0 735.2L527.5 740.0L528.0 743.8L528.5 746.6L529.0 748.4L529.5 749.0L530.0 748.4L530.5 746.8L531.0 744.1L531.5 740.3L532.0 735.5L532.5 729.9L533.0 723.5L533.5 716.4L534.0 708.8L534.5 700.7L535.0 692.2L535.5 683.5L536.0 674.7L536.5 665.8L537.0 656.9L537.5 648.0L538.0 639.2L538.5 630.6L539.0 622.1L539.5 613.7L540.0 605.5L540.5 597.5L541.0 589.7L541.5 582.0L542.0 574.6L542.5 567.5L543.0 560.6L543.5 554.0L544.0 547.8L544.5 542.1L545.0 536.8L545.5 532.1L546.0 527.9L546.5 524.5L547.0 521.8L547.5 519.9L548.0 518.8L548.5 518.5L549.0 519.0L549.5 520.3L550.0 522.4L550.5 525.3L551.0 528.8L551.5 532.9L552.0 537.5L552.5 542.5L553.0 547.9L553.5 553.5L554.0 559.3L554.5 565.2L555.0 571.1L555.5 577.1L556.0 583.0L556.5 588.8L557.0 594.6L557.5 600.4L558.0 606.1L558.5 611.9L559.0 617.8L559.5 623.9L560.0 630.1L560.5 636.5L561.0 643.2L561.5 650.2L562.0 657.4L562.5 664.9L563.0 672.6L563.5 680.5L564.0 688.4L564.5 696.3L565.0 704.1L565.5 711.7L566.0 718.9L566.5 725.6L567.0 731.6L567.5 737.0L568.0 741.4L568.5 744.9L569.0 747.3L569.5 748.7L570.0 748.9L570.5 748.0L571.0 746.0L571.5 742.9L572.0 738.8L572.5 733.7L573.0 727.8L573.5 721.2L574.0 713.9L574.5 706.0L575.0 697.8L575.5 689.3L576.0 680.5L576.5 671.7L577.0 662.7L577.5 653.8L578.0 645.0L578.5 636.3L579.0 627.7L579.5 619.2L580.0 610.9L580.5 602.8L581.0 594.8L581.5 587.1L582.0 579.5L582.5 572.2L583.0 565.1L583.5 558.3L584.0 551.9L584.5 545.8L585.0 540.2L585.5 535.1L586.0 530.6L586.5 526.7L587.0 523.5L587.5 521.1L588.0 519.4L588.5 518.6L589.0 518.6L589.5 519.4L590.0 521.0L590.5 523.3L591.0 526.4L591.5 530.1L592.0 534.4L592.5 539.2L593.0 544.3L593.5 549.8L594.0 555.5L594.5 561.3L595.0 567.2L595.5 573.2L596.0 579.1L596.5 584.9L597.0 590.8L597.5 596.6L598.0 602.3L598.5 608.1L599.0 613.9L599.5 619.9L600.0 626.0L600.5 632.3L601.0 638.8L601.5 645.6L602.0 652.6L602.5 659.9L603.0 667.5L603.5 675.3L604.0 683.2L604.5 691.1L605.0 699.0L605.5 706.7L606.0 714.2L606.5 721.2L607.0 727.7L607.5 733.5L608.0 738.6L608.5 742.7L609.0 745.8L609.5 747.9L610.0 748.9L610.5 748.7L611.0 747.5L611.5 745.1L612.0 741.6L612.5 737.2L613.0 731.8L613.5 725.6L614.0 718.7L614.5 711.3L615.0 703.3L615.5 694.9L616.0 686.3L616.5 677.5L617.0 668.6L617.5 659.7L618.0 650.8L618.5 642.0L619.0 633.3L619.5 624.8L620.0 616.4L620.5 608.1L621.0 600.0L621.5 592.2L622.0 584.5L622.5 577.0L623.0 569.7L623.5 562.8L624.0 556.1L624.5 549.8L625.0 543.8L625.5 538.4L626.0 533.5L626.5 529.2L627.0 525.5L627.5 522.6L628.0 520.4L628.5 519.0L629.0 518.5L629.5 518.7L630.0 519.8L630.5 521.7L631.0 524.3L631.5 527.6L632.0 531.5L632.5 536.0L633.0 540.9L633.5 546.1L634.0 551.7L634.5 557.4L635.0 563.3L635.5 569.2L636.0 575.2L636.5 581.1L637.0 586.9L637.5 592.7L638.0 598.5L638.5 604.3L639.0 610.1L639.5 615.9L640.0 621.9L640.5 628.1L641.0 634.4L641.5 641.1L642.0 647.9L642.5 655.1L643.0 662.5L643.5 670.1L644.0 677.9L644.5 685.9L645.0 693.8L645.5 701.7L646.0 709.3L646.5 716.6L647.0 723.5L647.5 729.8L648.0 735.3L648.5 740.1L649.0 743.9L649.5 746.7L650.0 748.4L650.5 749.0L651.0 748.4L651.5 746.8L652.0 744.0L652.5 740.2L653.0 735.4L653.5 729.8L654.0 723.4L654.5 716.3L655.0 708.6L655.5 700.5L656.0 692.0L656.5 683.3L657.0 674.5L657.5 665.6L658.0 656.7L658.5 647.8L659.0 639.0L659.5 630.4L660.0 621.9L660.5 613.5L661.0 605.4L661.5 597.3L662.0 589.5L662.5 581.9L663.0 574.5L663.5 567.3L664.0 560.4L664.5 553.9L665.0 547.7L665.5 541.9L666.0 536.7L666.5 532.0L667.0 527.9L667.5 524.5L668.0 521.8L668.5 519.9L669.0 518.8L669.5 518.5L670.0 519.0L670.5 520.4L671.0 522.5L671.5 525.3L672.0 528.9L672.5 533.0L673.0 537.6L673.5 542.6L674.0 548.0L674.5 553.6L675.0 559.4L675.5 565.3L676.0 571.3L676.5 577.2L677.0 583.1L677.5 588.9L678.0 594.7L678.5 600.5L679.0 606.2L679.5 612.1L680.0 618.0L680.5 624.0L681.0 630.2L681.5 636.7L682.0 643.4L682.5 650.3L683.0 657.6L683.5 665.1L684.0 672.8L684.5 680.6L685.0 688.6L685.5 696.5L686.0 704.3L686.5 711.9L687.0 719.0L687.5 725.7L688.0 731.8L688.5 737.1L689.0 741.5L689.5 744.9L690.0 747.4L690.5 748.7L691.0 748.9L691.5 748.0L692.0 745.9L692.5 742.8L693.0 738.7L693.5 733.6L694.0 727.7L694.5 721.0L695.0 713.7L695.5 705.9L696.0 697.6L696.5 689.1L697.0 680.4L697.5 671.5L698.0 662.6L698.5 653.7L699.0 644.8L699.5 636.1L700.0 627.5L700.5 619.0L701.0 610.7L701.5 602.6L702.0 594.7L702.5 586.9L703.0 579.4L703.5 572.0L704.0 565.0L704.5 558.2L705.0 551.7L705.5 545.7L706.0 540.1L706.5 535.0L707.0 530.5L707.5 526.6L708.0 523.5L708.5 521.0L709.0 519.4L709.5 518.6L710.0 518.6L710.5 519.4L711.0 521.0L711.5 523.4L712.0 526.5L712.5 530.2L713.0 534.5L713.5 539.3L714.0 544.4L714.5 549.9L715.0 555.6L715.5 561.4L716.0 567.3L716.5 573.3L717.0 579.2L717.5 585.1L718.0 590.9L718.5 596.7L719.0 602.4L719.5 608.2L720.0 614.1L720.5 620.0L721.0 626.1L721.5 632.4L722.0 638.9L722.5 645.7L723.0 652.8L723.5 660.1L724.0 667.7L724.5 675.4L725.0 683.3L725.5 691.3L726.0 699.2L726.5 706.9L727.0 714.3L727.5 721.4L728.0 727.8L728.5 733.7L729.0 738.7L729.5 742.8L730.0 745.9L730.5 747.9L731.0 748.9L731.5 748.7L732.0 747.4L732.5 745.0L733.0 741.5L733.5 737.1L734.0 731.7L734.5 725.5L735.0 718.6L735.5 711.1L736.0 703.1L736.5 694.8L737.0 686.1L737.5 677.3L738.0 668.5L738.5 659.5L739.0 650.6L739.5 641.8L740.0 633.1L740.5 624.6L741.0 616.2L741.5 608.0L742.0 599.9L742.5 592.0L743.0 584.3L743.5 576.8L744.0 569.6L744.5 562.6L745.0 555.9L745.5 549.6L746.0 543.7L746.5 538.3L747.0 533.4L747.5 529.1L748.0 525.5L748.5 522.5L749.0 520.4L749.5 519.0L750.0 518.5L750.5 518.8L751.0 519.8L751.5 521.7L752.0 524.3L752.5 527.7L753.0 531.6L753.5 536.1L754.0 541.0L754.5 546.3L755.0 551.8L755.5 557.6L756.0 563.4L756.5 569.4L757.0 575.3L757.5 581.2L758.0 587.0L758.5 592.9L759.0 598.6L759.5 604.4L760.0 610.2L760.5 616.1L761.0 622.1L761.5 628.2L762.0 634.6L762.5 641.2L763.0 648.1L763.5 655.2L764.0 662.6L764.5 670.3L765.0 678.1L765.5 686.0L766.0 694.0L766.5 701.8L767.0 709.5L767.5 716.8L768.0 723.6L768.5 729.9L769.0 735.4L769.5 740.2L770.0 743.9L770.5 746.7L771.0 748.4L771.5 749.0L772.0 748.4L772.5 746.7L773.0 743.9L773.5 740.1L774.0 735.3L774.5 729.7L775.0 723.2L775.5 716.1L776.0 708.4L776.5 700.3L777.0 691.9L777.5 683.2L778.0 674.3L778.5 665.4L779.0 656.5L779.5 647.6L780.0 638.9L780.5 630.2L781.0 621.7L781.5 613.4L782.0 605.2L782.5 597.2L783.0 589.4L783.5 581.7L784.0 574.3" stroke="#ff0000" stroke-width="2.200" fill="none" stroke-linejoin="round"/><rect x="56" y="786" width="5" height="1" fill="#000"/><text x="54" y="790.6" text-anchor="end" font-family="Liberation Sans, sans-serif" font-size="12.500" fill="#000">6</text><rect x="56" y="752" width="5" height="1" fill="#000"/><text x="54" y="756.6" text-anchor="end" font-family="Liberation Sans, sans-serif" font-size="12.500" fill="#000">7</text><rect x="56" y="718" width="5" height="1" fill="#000"/><text x="54" y="722.6" text-anchor="end" font-family="Liberation Sans, sans-serif" font-size="12.500" fill="#000">8</text><rect x="56" y="684" width="5" height="1" fill="#000"/><text x="54" y="688.6" text-anchor="end" font-family="Liberation Sans, sans-serif" font-size="12.500" fill="#000">9</text><rect x="56" y="649" width="5" height="1" fill="#000"/><text x="54" y="653.6" text-anchor="end" font-family="Liberation Sans, sans-serif" font-size="12.500" fill="#000">10</text><rect x="56" y="615" width="5" height="1" fill="#000"/><text x="54" y="619.6" text-anchor="end" font-family="Liberation Sans, sans-serif" font-size="12.500" fill="#000">11</text><rect x="56" y="581" width="5" height="1" fill="#000"/><text x="54" y="585.6" text-anchor="end" font-family="Liberation Sans, sans-serif" font-size="12.500" fill="#000">12</text><rect x="56" y="547" width="5" height="1" fill="#000"/><text x="54" y="551.6" text-anchor="end" font-family="Liberation Sans, sans-serif" font-size="12.500" fill="#000">13</text><rect x="56" y="512" width="5" height="1" fill="#000"/><text x="54" y="516.6" text-anchor="end" font-family="Liberation Sans, sans-serif" font-size="12.500" fill="#000">14</text><rect x="63" y="789" width="1" height="5" fill="#000"/><text x="63.7" y="806.500" text-anchor="middle" font-family="Liberation Sans, sans-serif" font-size="12.500" fill="#000">145.11</text><rect x="122" y="789" width="1" height="5" fill="#000"/><text x="122.5" y="806.500" text-anchor="middle" font-family="Liberation Sans, sans-serif" font-size="12.500" fill="#000">150.00</text><rect x="182" y="789" width="1" height="5" fill="#000"/><text x="182.6" y="806.500" text-anchor="middle" font-family="Liberation Sans, sans-serif" font-size="12.500" fill="#000">155.00</text><rect x="242" y="789" width="1" height="5" fill="#000"/><text x="242.6" y="806.500" text-anchor="middle" font-family="Liberation Sans, sans-serif" font-size="12.500" fill="#000">160.00</text><rect x="302" y="789" width="1" height="5" fill="#000"/><text x="302.7" y="806.500" text-anchor="middle" font-family="Liberation Sans, sans-serif" font-size="12.500" fill="#000">165.00</text><rect x="362" y="789" width="1" height="5" fill="#000"/><text x="362.8" y="806.500" text-anchor="middle" font-family="Liberation Sans, sans-serif" font-size="12.500" fill="#000">170.00</text><rect x="422" y="789" width="1" height="5" fill="#000"/><text x="422.9" y="806.500" text-anchor="middle" font-family="Liberation Sans, sans-serif" font-size="12.500" fill="#000">175.00</text><rect x="483" y="789" width="1" height="5" fill="#000"/><text x="483.0" y="806.500" text-anchor="middle" font-family="Liberation Sans, sans-serif" font-size="12.500" fill="#000">180.00</text><rect x="543" y="789" width="1" height="5" fill="#000"/><text x="543.1" y="806.500" text-anchor="middle" font-family="Liberation Sans, sans-serif" font-size="12.500" fill="#000">185.00</text><rect x="603" y="789" width="1" height="5" fill="#000"/><text x="603.2" y="806.500" text-anchor="middle" font-family="Liberation Sans, sans-serif" font-size="12.500" fill="#000">190.00</text><rect x="663" y="789" width="1" height="5" fill="#000"/><text x="663.3" y="806.500" text-anchor="middle" font-family="Liberation Sans, sans-serif" font-size="12.500" fill="#000">195.00</text><rect x="723" y="789" width="1" height="5" fill="#000"/><text x="723.4" y="806.500" text-anchor="middle" font-family="Liberation Sans, sans-serif" font-size="12.500" fill="#000">200.00</text><rect x="784" y="789" width="2" height="5" fill="#000"/><text x="784.7" y="806.500" text-anchor="middle" font-family="Liberation Sans, sans-serif" font-size="12.500" fill="#000">205.10</text></svg>
<div class="t" style='left:293.0px;top:814.0px;font-size:12px;color:#000;line-height:16px;width:300px;text-align:center;'>时间/秒</div>
<div class="t" style='left:-122px;top:641px;width:300px;text-align:center;font-size:12px;line-height:16px;transform:rotate(-90deg);'>压力<span class="l">/Mpa</span></div>
<div style="left:816px;top:190px;width:578px;height:230px;background:#fff"></div>
<div style="left:816px;top:190px;width:578px;height:1px;background:#b4b4b4"></div>
<div style="left:816px;top:164px;width:46px;height:27px;background:#fff;border-right:1.500px solid #a0a4a8;border-top:1px solid #b0b0b0;border-left:1px solid #b8b8b8;box-sizing:border-box"></div>
<div style="left:861px;top:164px;width:45px;height:27px;background:linear-gradient(#f2f2f2,#e0e0e0);border:1px solid #a8a8a8;box-sizing:border-box"></div>
<div class="t" style='left:686.8px;top:168.7px;font-size:12px;color:#000;line-height:16px;width:300px;text-align:center;'>控制</div>
<div class="t" style='left:733.3px;top:170.5px;font-size:12px;color:#000;line-height:16px;width:300px;text-align:center;'>参数</div>
<div class="t" style='left:1306px;top:163px;font-size:21px;color:#3399ff;font-weight:700;line-height:28px;'>操作面板</div>
<div style="left:845px;top:214px;width:245px;height:52px;box-sizing:border-box;border:1px solid #4a4a4a;background:linear-gradient(#cdcdcd,#c6c6c6 45%,#b6b6b6);box-shadow:inset 3px 2px 2px #e2e2e2, inset -4px -3px 3px #8e8e8e;"></div>
<div class="t" style='left:817.5px;top:226.6px;font-size:25.5px;color:#000;line-height:32px;width:300px;text-align:center;'>试验</div>
<div style="left:1126px;top:214px;width:245px;height:52px;box-sizing:border-box;border:1px solid #4a4a4a;background:linear-gradient(#cdcdcd,#c6c6c6 45%,#b6b6b6);box-shadow:inset 3px 2px 2px #e2e2e2, inset -4px -3px 3px #8e8e8e;"></div>
<div class="t" style='left:1098.5px;top:226.6px;font-size:25.5px;color:#000;line-height:32px;width:300px;text-align:center;'>报表</div>
<div style="left:845px;top:278px;width:245px;height:52px;box-sizing:border-box;border:1px solid #4a4a4a;background:linear-gradient(#cdcdcd,#c6c6c6 45%,#b6b6b6);box-shadow:inset 3px 2px 2px #e2e2e2, inset -4px -3px 3px #8e8e8e;"></div>
<div class="t" style='left:817.5px;top:290.6px;font-size:25.5px;color:#000;line-height:32px;width:300px;text-align:center;'>停止</div>
<div style="left:1126px;top:278px;width:245px;height:52px;box-sizing:border-box;border:1px solid #4a4a4a;background:linear-gradient(#cdcdcd,#c6c6c6 45%,#b6b6b6);box-shadow:inset 3px 2px 2px #e2e2e2, inset -4px -3px 3px #8e8e8e;"></div>
<div class="t" style='left:1098.5px;top:290.6px;font-size:25.5px;color:#000;line-height:32px;width:300px;text-align:center;'>泄压</div>
<div class="t" style='left:771.5px;top:357.8px;font-size:18px;color:#000;line-height:24px;width:300px;text-align:center;'>气缸</div>
<div class="t" style='left:817.5px;top:357.8px;font-size:18px;color:#000;line-height:24px;width:300px;text-align:center;'>出压</div>
<div class="t" style='left:863.5px;top:357.8px;font-size:18px;color:#000;line-height:24px;width:300px;text-align:center;'>泄荷</div>
<div style="left:913.7px;top:386.0px;width:15.0px;height:15.0px;border-radius:50%;background:radial-gradient(circle at 40% 35%, #d8ff9a 0%, #66ff10 35%, #30d800 100%);box-shadow:-0.600px -0.600px 1px 1.300px #cdcdcd, 0.800px 0.800px 1px 1.500px #f4f4f4;"></div>
<div style="left:959.5px;top:386.0px;width:15.0px;height:15.0px;border-radius:50%;background:radial-gradient(circle at 40% 35%, #d8ff9a 0%, #66ff10 35%, #30d800 100%);box-shadow:-0.600px -0.600px 1px 1.300px #cdcdcd, 0.800px 0.800px 1px 1.500px #f4f4f4;"></div>
<div style="left:1006.5px;top:386.0px;width:15.0px;height:15.0px;border-radius:50%;background:radial-gradient(circle at 40% 35%, #4a6a30 0%, #223c0c 45%, #14280a 100%);box-shadow:-0.600px -0.600px 1px 1.300px #cdcdcd, 0.800px 0.800px 1px 1.500px #f4f4f4;"></div>
<div style="left:1245.1px;top:379.1px;width:14.4px;height:14.4px;border-radius:50%;background:radial-gradient(circle at 40% 35%, #4a6a30 0%, #223c0c 45%, #14280a 100%);box-shadow:-0.600px -0.600px 1px 1.300px #cdcdcd, 0.800px 0.800px 1px 1.500px #f4f4f4;"></div>
<div style="left:1268.1px;top:379.1px;width:14.4px;height:14.4px;border-radius:50%;background:radial-gradient(circle at 40% 35%, #4a6a30 0%, #223c0c 45%, #14280a 100%);box-shadow:-0.600px -0.600px 1px 1.300px #cdcdcd, 0.800px 0.800px 1px 1.500px #f4f4f4;"></div>
<div style="left:1291.1px;top:379.1px;width:14.4px;height:14.4px;border-radius:50%;background:radial-gradient(circle at 40% 35%, #4a6a30 0%, #223c0c 45%, #14280a 100%);box-shadow:-0.600px -0.600px 1px 1.300px #cdcdcd, 0.800px 0.800px 1px 1.500px #f4f4f4;"></div>
<div style="left:1314.1px;top:379.1px;width:14.4px;height:14.4px;border-radius:50%;background:radial-gradient(circle at 40% 35%, #d8ff9a 0%, #66ff10 35%, #30d800 100%);box-shadow:-0.600px -0.600px 1px 1.300px #cdcdcd, 0.800px 0.800px 1px 1.500px #f4f4f4;"></div>
<div style="left:1337.1px;top:379.1px;width:14.4px;height:14.4px;border-radius:50%;background:radial-gradient(circle at 40% 35%, #4a6a30 0%, #223c0c 45%, #14280a 100%);box-shadow:-0.600px -0.600px 1px 1.300px #cdcdcd, 0.800px 0.800px 1px 1.500px #f4f4f4;"></div>
<div style="left:1360.1px;top:379.1px;width:14.4px;height:14.4px;border-radius:50%;background:radial-gradient(circle at 40% 35%, #4a6a30 0%, #223c0c 45%, #14280a 100%);box-shadow:-0.600px -0.600px 1px 1.300px #cdcdcd, 0.800px 0.800px 1px 1.500px #f4f4f4;"></div>
<div class="t" style='left:851px;top:442px;font-size:28px;color:#3399ff;font-weight:700;line-height:36px;'>保压最大值<span style="margin-left:4.500px">:</span></div>
<div style="left:1084px;top:437px;width:193px;height:40px;background:#000;box-sizing:border-box;border-style:solid;border-width:3px;border-color:#d8d8d8 #fff #fff #d8d8d8"></div>
<div class="t" style='left:1091.5px;top:439.5px;font-size:25.5px;color:#ff4a30;line-height:34px;'>13.946</div>
<div class="t" style='left:1291px;top:437.2px;font-size:28.5px;color:#3399ff;font-weight:700;line-height:36px;letter-spacing:2px;'>Mpa</div>
<div class="t" style='left:851px;top:489px;font-size:28px;color:#3399ff;font-weight:700;line-height:36px;'>保压压降值<span style="margin-left:4.500px">:</span></div>
<div style="left:1084px;top:484px;width:193px;height:40px;background:#000;box-sizing:border-box;border-style:solid;border-width:3px;border-color:#d8d8d8 #fff #fff #d8d8d8"></div>
<div class="t" style='left:1091.5px;top:487.2px;font-size:25.5px;color:#ff4a30;line-height:34px;'>1.6839</div>
<div class="t" style='left:1291px;top:484.2px;font-size:28.5px;color:#3399ff;font-weight:700;line-height:36px;letter-spacing:2px;'>Mpa</div>
<div class="t" style='left:851px;top:536px;font-size:28px;color:#3399ff;font-weight:700;line-height:36px;'>试验次数<span style="margin-left:4.500px">:</span></div>
<div style="left:1084px;top:532px;width:193px;height:39.5px;background:#000;box-sizing:border-box;border-style:solid;border-width:3px;border-color:#d8d8d8 #fff #fff #d8d8d8"></div>
<div class="t" style='left:1091.5px;top:534.8px;font-size:25.5px;color:#ff4a30;line-height:34px;'>93</div>
<div class="t" style='left:1291px;top:535px;font-size:28px;color:#3399ff;font-weight:700;line-height:36px;'>次</div>
<div class="t" style='left:1215px;top:591px;font-size:15.5px;color:#000;line-height:22px;'>保压用时(s)</div>
<div style="left:1299px;top:587px;width:89.5px;height:29px;background:#d4d4d4;box-sizing:border-box;border-style:solid;border-width:2px 4px 3px 2px;border-color:#c0c0c0 #fdfdfd #fdfdfd #c0c0c0"></div>
<div class="t" style='left:1306px;top:592px;font-size:16px;color:#000;line-height:22px;'>0.821997</div>
<div style="left:823px;top:618px;width:565px;height:209px;background:#b4b4b4;box-sizing:border-box;box-shadow:inset 2px 2px 1.500px #d2d2d2, inset -3px -3px 2px #808080;"></div>
<div style="left:823px;top:590.5px;width:71.5px;height:30px;background:#b4b4b4;box-sizing:border-box;border-radius:4px 4px 0 0;box-shadow:inset 2px 2px 1.500px #d4d4d4, inset -3px 0 2px #868686;"></div>
<div style="left:825px;top:618px;width:66.5px;height:4px;background:#b4b4b4"></div>
<div style="left:894.5px;top:593px;width:66.5px;height:25.5px;background:#b8b8b8;box-sizing:border-box;border-radius:4px 4px 0 0;box-shadow:inset 2px 2px 1.500px #d4d4d4, inset -3px 0 2px #868686;"></div>
<div class="t" style='left:707.0px;top:596.2px;font-size:12px;color:#000;line-height:16px;width:300px;text-align:center;'>状态信息</div>
<div class="t" style='left:777.0px;top:598.2px;font-size:12px;color:#000;line-height:16px;width:300px;text-align:center;'>错误信息</div>
<div style="left:833px;top:631px;width:547.5px;height:186.5px;background:#d2d2d2;box-sizing:border-box;border-style:solid;border-width:3.500px 4px 3.500px 3.500px;border-color:#a0a0a0 #c2c2c2 #c2c2c2 #a0a0a0"></div>
<div class="t" style='left:839px;top:637.5px;font-size:12px;color:#000;line-height:17px;'>上保压中</div>
</body></html>
